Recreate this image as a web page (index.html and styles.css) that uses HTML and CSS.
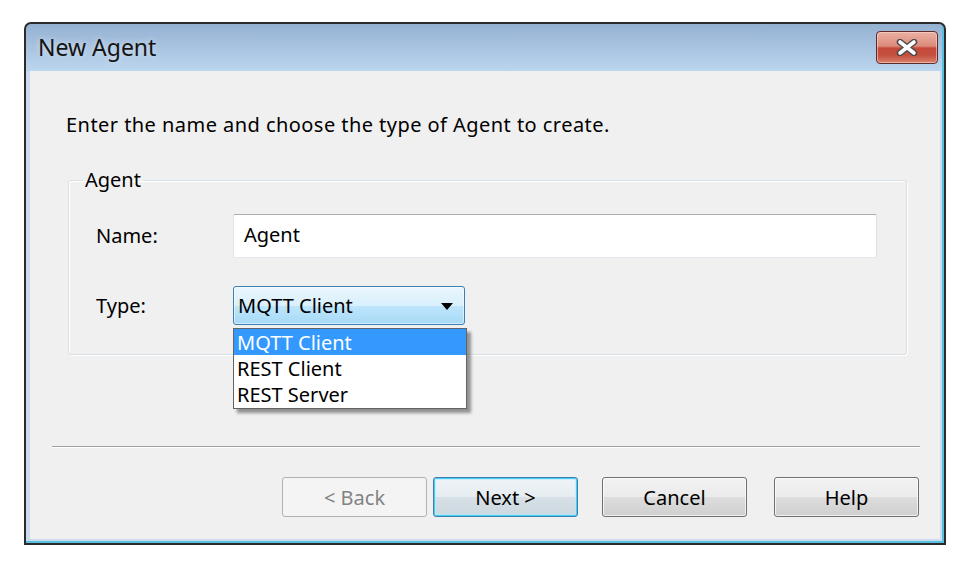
FILE: index.html
```html
<!DOCTYPE html>
<html>
<head>
<meta charset="utf-8">
<title>New Agent</title>
<link rel="stylesheet" href="styles.css">
</head>
<body>
<div class="window">
  <div class="titlebar">
    <span class="title">New Agent</span>
    <button class="close" aria-label="Close">
      <svg width="22" height="17" viewBox="0 0 22 17">
        <path d="M4 3 L18 14 M18 3 L4 14" stroke="#4a4a4a" stroke-width="6.5" stroke-linecap="round" fill="none"/>
        <path d="M4 3 L18 14 M18 3 L4 14" stroke="#ffffff" stroke-width="3.6" stroke-linecap="round" fill="none"/>
      </svg>
    </button>
  </div>
  <div class="client">
    <p class="intro">Enter the name and choose the type of Agent to create.</p>
    <fieldset class="group">
      <legend>Agent</legend>
      <div class="fields">
        <span class="label">Name:</span>
        <div class="input">Agent</div>
        <span class="label">Type:</span>
        <div class="combo-wrap">
          <div class="combo"><span>MQTT Client</span><span class="arrow"></span></div>
          <ul class="list">
            <li class="sel">MQTT Client</li>
            <li>REST Client</li>
            <li>REST Server</li>
          </ul>
        </div>
      </div>
    </fieldset>
    <div class="sep"></div>
    <div class="buttons">
      <button class="btn disabled">&lt; Back</button>
      <button class="btn default">Next &gt;</button>
      <button class="btn cancel">Cancel</button>
      <button class="btn help">Help</button>
    </div>
  </div>
</div>
</body>
</html>
```

FILE: styles.css
```css
body {
  margin: 0;
  background: #ffffff;
  font-family: "Noto Sans", "Open Sans", sans-serif;
  color: #000;
}

.window {
  margin: 22px 0 0 24px;
  width: 922px;
  height: 523px;
  box-sizing: border-box;
  border: 2px solid #2b2b2b;
  border-radius: 7px 7px 0 0;
  background: linear-gradient(#95b1d2 0, #bcd6ef 47px, #c9dcf0 48px, #c9dcf0 100%);
  box-shadow: inset -2px -2px 0 #58bfe0;
  display: flex;
  flex-direction: column;
}

.titlebar {
  height: 47px;
  flex: none;
  display: flex;
  justify-content: space-between;
  align-items: flex-start;
  padding: 0 6px 0 12px;
}

.title {
  font-size: 23px;
  line-height: 46px;
  color: #141414;
  text-shadow: 0 0 6px rgba(255, 255, 255, 0.55);
}

.close {
  margin-top: 7px;
  width: 62px;
  height: 33px;
  padding: 0;
  border: 1px solid #5e2a2a;
  border-radius: 4px;
  background: linear-gradient(#eab0a3 0%, #dc8c7b 45%, #c5483a 52%, #c4503e 75%, #d9826d 100%);
  box-shadow: inset 0 0 0 1px rgba(255, 220, 210, 0.55);
  display: flex;
  align-items: center;
  justify-content: center;
}

.client {
  flex: 1;
  margin: 0 4px 4px;
  background: #f0f0f0;
  padding-top: 42px;
}

.intro {
  margin: 0 0 0 36px;
  font-size: 20px;
  line-height: 24px;
  letter-spacing: 0.45px;
}

.group {
  margin: 31px 33px 0 38px;
  padding: 22px 29px 29px 0;
  border: 1px solid #d5dfe5;
  border-radius: 3px;
  box-shadow: inset 1px 1px 0 #ffffff, 1px 1px 0 #ffffff;
  min-width: 0;
}

.group legend {
  margin-left: 14px;
  padding: 0 2px;
  font-size: 20px;
  line-height: 24px;
}

.fields {
  display: grid;
  grid-template-columns: 137px 1fr;
  row-gap: 28px;
  align-items: center;
  padding-left: 27px;
}

.label {
  font-size: 20px;
  line-height: 22px;
}

.input {
  height: 44px;
  box-sizing: border-box;
  border: 1px solid;
  border-color: #abadb3 #dbdfe6 #e3e9ef #e2e3ea;
  border-radius: 2px;
  background: #ffffff;
  padding-left: 10px;
  font-size: 20px;
  line-height: 40px;
}

.combo-wrap {
  position: relative;
  justify-self: start;
}

.combo {
  width: 232px;
  height: 39px;
  box-sizing: border-box;
  border: 1px solid #3c7fb1;
  border-radius: 3px;
  background: linear-gradient(#eaf6fd 0%, #d9f0fc 50%, #bee6fd 51%, #a7d9f5 100%);
  box-shadow: inset 0 0 0 1px rgba(255, 255, 255, 0.5);
  display: flex;
  align-items: center;
  justify-content: space-between;
  padding: 0 11px 0 4px;
  font-size: 20px;
  line-height: 24px;
}

.arrow {
  width: 0;
  height: 0;
  border-left: 6px solid transparent;
  border-right: 6px solid transparent;
  border-top: 7px solid #000;
  margin-top: 2px;
}

.list {
  position: absolute;
  top: calc(100% + 3px);
  left: 0;
  width: 234px;
  box-sizing: border-box;
  margin: 0;
  padding: 0 0 1px;
  list-style: none;
  background: #ffffff;
  border: 1px solid #646464;
  box-shadow: 4px 4px 3px rgba(0, 0, 0, 0.4);
  font-size: 20px;
  line-height: 26px;
}

.list li {
  padding-left: 3px;
  padding-top: 1px;
  height: 26px;
  box-sizing: border-box;
  line-height: 26px;
}

.list li.sel {
  background: #3399ff;
  color: #ffffff;
}

.sep {
  margin: 91px 20px 0 22px;
  border-top: 1px solid #a0a0a0;
  border-bottom: 1px solid #ffffff;
}

.buttons {
  margin-top: 29px;
  display: flex;
  justify-content: flex-end;
  padding-right: 21px;
}

.btn {
  width: 145px;
  height: 40px;
  box-sizing: border-box;
  border: 1px solid #707070;
  border-radius: 3px;
  background: linear-gradient(#f2f2f2 0%, #ebebeb 50%, #dddddd 51%, #cfcfcf 100%);
  box-shadow: inset 0 0 0 1px rgba(255, 255, 255, 0.7);
  font-family: "Noto Sans", "Open Sans", sans-serif;
  font-size: 20px;
  color: #000;
  padding: 0;
}

.btn.disabled {
  border-color: #adb2b5;
  background: #f4f4f4;
  color: #838383;
  box-shadow: none;
}

.btn.default {
  margin-left: 6px;
  border-color: #3c7fb1;
  box-shadow: inset 0 0 0 1px #48cdf5, inset 0 0 0 2px rgba(180, 235, 252, 0.6);
  background: linear-gradient(#eef3f6 0%, #e6edf1 50%, #d6e0e6 51%, #ccd8df 100%);
}

.btn.cancel {
  margin-left: 24px;
}

.btn.help {
  margin-left: 27px;
}
```
